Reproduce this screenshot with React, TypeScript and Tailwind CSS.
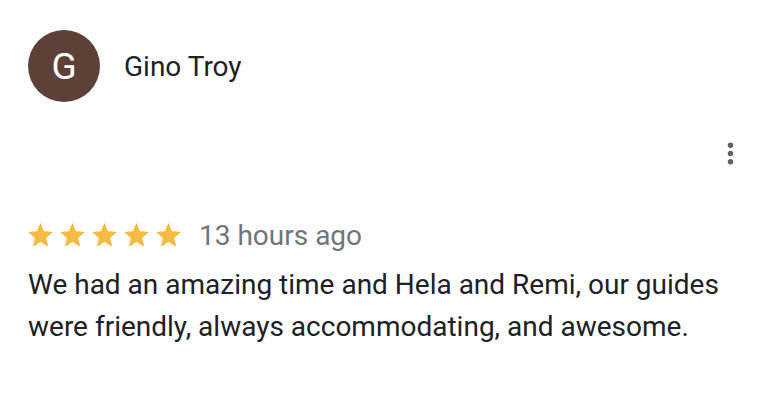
const Star = () => (
  <svg className="w-[25px] h-[24px] fill-[#f5bb41]" viewBox="2 2 20 19.27">
    <path d="M12 17.27L18.18 21l-1.64-7.03L22 9.24l-7.19-.61L12 2 9.19 8.63 2 9.24l5.46 4.73L5.82 21z" />
  </svg>
);

export default function App() {
  return (
    <div
      className="w-[772px] h-[404px] bg-white pl-[28px] pr-[25px] pt-[30px] text-[#202124]"
      style={{ fontFamily: 'Roboto, "Liberation Sans", sans-serif' }}
    >
      {/* Author */}
      <div className="flex items-center">
        <div className="w-[72px] h-[72px] rounded-full bg-[#5d4037] flex items-center justify-center text-white text-[37px] leading-none">
          G
        </div>
        <div className="ml-[24px] text-[28px] leading-[32px] mt-[2px]">Gino Troy</div>
      </div>

      {/* Menu */}
      <div className="flex justify-end mt-[35px]">
        <svg className="w-[33px] h-[33px] fill-[#5f6368]" viewBox="0 0 24 24">
          <circle cx="12" cy="6" r="2" />
          <circle cx="12" cy="12" r="2" />
          <circle cx="12" cy="18" r="2" />
        </svg>
      </div>

      {/* Rating */}
      <div className="flex items-center mt-[50px] h-[30px]">
        <div className="flex gap-[7px]">
          <Star />
          <Star />
          <Star />
          <Star />
          <Star />
        </div>
        <span className="ml-[18px] mt-[2px] text-[28px] leading-[30px] text-[#70757a]">13 hours ago</span>
      </div>

      {/* Review */}
      <p className="mt-[14px] text-[28px] leading-[42px]">
        We had an amazing time and Hela and Remi, our guides were friendly, always accommodating, and awesome.
      </p>
    </div>
  );
}
